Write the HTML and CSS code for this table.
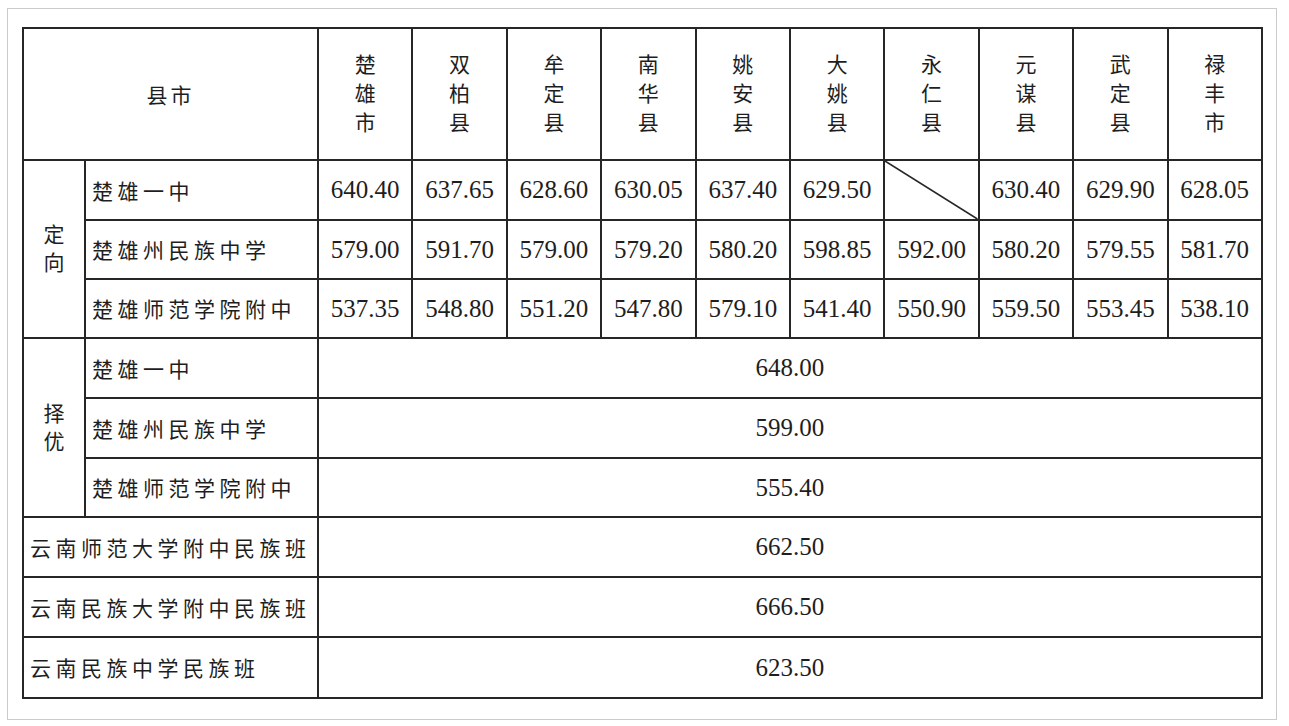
FILE: index.html
```html
<!DOCTYPE html>
<html lang="zh-CN">
<head>
<meta charset="utf-8">
<title>录取分数线</title>
<link rel="stylesheet" href="styles.css">
</head>
<body>
<div class="frame">
  <table class="score">
    <colgroup>
      <col class="c-a"><col class="c-b">
      <col class="c-n"><col class="c-n"><col class="c-n"><col class="c-n"><col class="c-n">
      <col class="c-n"><col class="c-n"><col class="c-n"><col class="c-n"><col class="c-n">
    </colgroup>
    <tr class="r-head">
      <td colspan="2" class="cn center">县市</td>
      <td class="cn vert"><div>楚<br>雄<br>市</div></td>
      <td class="cn vert"><div>双<br>柏<br>县</div></td>
      <td class="cn vert"><div>牟<br>定<br>县</div></td>
      <td class="cn vert"><div>南<br>华<br>县</div></td>
      <td class="cn vert"><div>姚<br>安<br>县</div></td>
      <td class="cn vert"><div>大<br>姚<br>县</div></td>
      <td class="cn vert"><div>永<br>仁<br>县</div></td>
      <td class="cn vert"><div>元<br>谋<br>县</div></td>
      <td class="cn vert"><div>武<br>定<br>县</div></td>
      <td class="cn vert"><div>禄<br>丰<br>市</div></td>
    </tr>
    <tr class="r60">
      <td rowspan="3" class="cn group"><div>定<br>向</div></td>
      <td class="cn label">楚雄一中</td>
      <td class="num">640.40</td><td class="num">637.65</td><td class="num">628.60</td><td class="num">630.05</td><td class="num">637.40</td>
      <td class="num">629.50</td><td class="num slash"><svg viewBox="0 0 100 100" preserveAspectRatio="none"><line x1="0" y1="0" x2="100" y2="100"/></svg></td><td class="num">630.40</td><td class="num">629.90</td><td class="num">628.05</td>
    </tr>
    <tr class="r59">
      <td class="cn label">楚雄州民族中学</td>
      <td class="num">579.00</td><td class="num">591.70</td><td class="num">579.00</td><td class="num">579.20</td><td class="num">580.20</td>
      <td class="num">598.85</td><td class="num">592.00</td><td class="num">580.20</td><td class="num">579.55</td><td class="num">581.70</td>
    </tr>
    <tr class="r59">
      <td class="cn label">楚雄师范学院附中</td>
      <td class="num">537.35</td><td class="num">548.80</td><td class="num">551.20</td><td class="num">547.80</td><td class="num">579.10</td>
      <td class="num">541.40</td><td class="num">550.90</td><td class="num">559.50</td><td class="num">553.45</td><td class="num">538.10</td>
    </tr>
    <tr class="r60">
      <td rowspan="3" class="cn group"><div>择<br>优</div></td>
      <td class="cn label">楚雄一中</td>
      <td colspan="10" class="num">648.00</td>
    </tr>
    <tr class="r60">
      <td class="cn label">楚雄州民族中学</td>
      <td colspan="10" class="num">599.00</td>
    </tr>
    <tr class="r59">
      <td class="cn label">楚雄师范学院附中</td>
      <td colspan="10" class="num">555.40</td>
    </tr>
    <tr class="r60">
      <td colspan="2" class="cn label">云南师范大学附中民族班</td>
      <td colspan="10" class="num">662.50</td>
    </tr>
    <tr class="r60">
      <td colspan="2" class="cn label">云南民族大学附中民族班</td>
      <td colspan="10" class="num">666.50</td>
    </tr>
    <tr class="r61">
      <td colspan="2" class="cn label">云南民族中学民族班</td>
      <td colspan="10" class="num">623.50</td>
    </tr>
  </table>
</div>
</body>
</html>
```
FILE: styles.css
```css
html, body {
  margin: 0;
  padding: 0;
  background: #ffffff;
}

.frame {
  box-sizing: border-box;
  margin: 8px 0 0 7px;
  width: 1270px;
  height: 712px;
  border: 1px solid #cbcbcb;
  padding: 18px 0 0 14px;
}

.score {
  border-collapse: collapse;
  table-layout: fixed;
  width: 1239px;
  color: #1e1e1e;
}

.score td {
  border: 2px solid #262626;
  padding: 0;
  vertical-align: middle;
}

.c-a { width: 62px; }
.c-b { width: 233px; }
.c-n { width: 94.4px; }

.r-head td { height: 130px; }
.r60 td { height: 58px; }
.r59 td { height: 57px; }
.r61 td { height: 59px; }

.cn {
  font-family: "Noto Sans CJK SC", "Noto Sans CJK JP", sans-serif;
  font-size: 21px;
  line-height: 29px;
}

.center {
  text-align: center;
  letter-spacing: 3px;
}

.vert {
  text-align: center;
}

.vert div {
  line-height: 29px;
  padding-bottom: 4px;
}

.group {
  text-align: center;
}

.group div {
  line-height: 28px;
  padding-bottom: 4px;
}

.label {
  padding-left: 6px !important;
  letter-spacing: 4.5px;
  white-space: nowrap;
}

.num {
  font-family: "Liberation Serif", "Times New Roman", serif;
  font-size: 25px;
  text-align: center;
}

.slash {
  position: relative;
}

.slash svg {
  position: absolute;
  left: 0;
  top: 0;
  width: 100%;
  height: 100%;
}

.slash line {
  stroke: #262626;
  stroke-width: 1.6px;
  vector-effect: non-scaling-stroke;
}
```
